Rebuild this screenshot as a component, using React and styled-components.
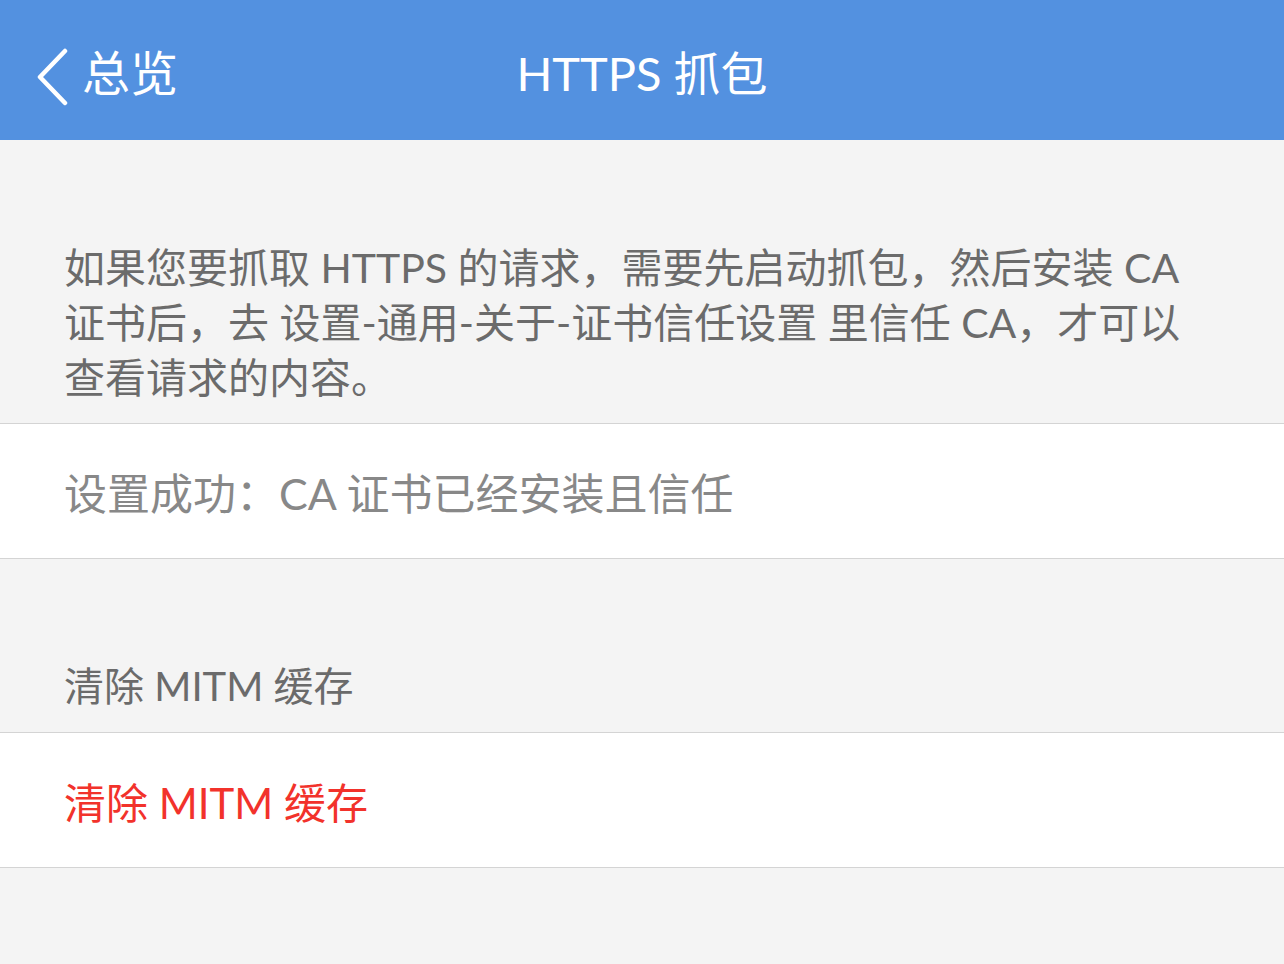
import React from 'react'
import styled, { createGlobalStyle } from 'styled-components'

const GlobalStyle = createGlobalStyle`
  html, body {
    margin: 0;
    padding: 0;
    background: #f4f4f4;
  }
  body {
    font-family: Lato, "Noto Sans CJK SC", "Noto Sans", sans-serif;
  }
`

const Page = styled.div`
  min-height: 964px;
  background: #f4f4f4;
`

const NavBar = styled.header`
  display: grid;
  grid-template-columns: 1fr auto 1fr;
  align-items: center;
  height: 140px;
  color: #ffffff;
  background-color: #5391e0;
`

const BackButton = styled.button`
  display: flex;
  align-items: center;
  gap: 14px;
  justify-self: start;
  padding: 0 0 0 36px;
  border: 0;
  background: none;
  color: inherit;
  font: inherit;
  font-size: 48px;
  cursor: pointer;

  svg {
    display: block;
    margin-top: 14px;
  }
`

const Title = styled.h1`
  margin: 0;
  font-size: 47px;
  font-weight: 400;
`

const GroupNote = styled.p`
  margin: 0;
  padding: ${p => (p.$top ? '100px 78px 18px 64px' : '100px 64px 18px 64px')};
  font-size: ${p => p.$size || 41}px;
  line-height: 55px;
  color: #6b6b6b;
`

const Cell = styled.div`
  display: flex;
  align-items: center;
  height: 134px;
  padding: 0 64px;
  background: #ffffff;
  border-top: 1px solid #d4d4d4;
  border-bottom: 1px solid #d4d4d4;
  font-size: ${p => p.$size}px;
  color: ${p => (p.$danger ? '#f2322b' : '#888888')};
  cursor: ${p => (p.$danger ? 'pointer' : 'default')};
`

const Chevron = () => (
  <svg width="32" height="58" viewBox="0 0 32 58" fill="none">
    <path d="M29 3 L4 29 L29 55" stroke="#ffffff" strokeWidth="4.5" strokeLinecap="round" strokeLinejoin="round" />
  </svg>
)

export default function App() {
  return (
    <Page>
      <GlobalStyle />
      <NavBar>
        <BackButton>
          <Chevron />
          <span>总览</span>
        </BackButton>
        <Title>HTTPS 抓包</Title>
        <div />
      </NavBar>

      <GroupNote $top>
        如果您要抓取 HTTPS 的请求，需要先启动抓包，然后安装 CA 证书后，去 设置-通用-关于-证书信任设置 里信任 CA，才可以查看请求的内容。
      </GroupNote>
      <Cell $size={43}>设置成功：CA 证书已经安装且信任</Cell>

      <GroupNote $size={40}>清除 MITM 缓存</GroupNote>
      <Cell $size={42} $danger>清除 MITM 缓存</Cell>
    </Page>
  )
}
